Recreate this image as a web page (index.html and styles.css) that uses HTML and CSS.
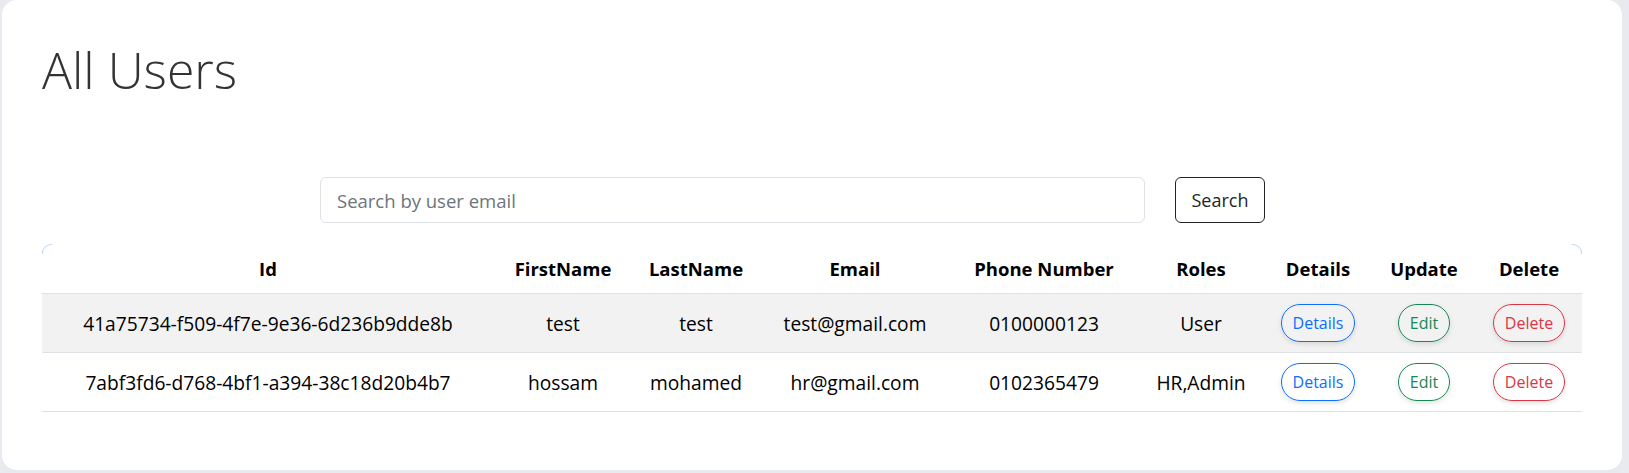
FILE: index.html
```html
<!DOCTYPE html>
<html lang="en">
<head>
<meta charset="utf-8">
<title>All Users</title>
<link rel="stylesheet" href="styles.css">
</head>
<body>
<main class="card">
  <h1 class="title">All Users</h1>
  <form class="search">
    <input class="search-input" type="text" placeholder="Search by user email">
    <button class="search-btn" type="button">Search</button>
  </form>
  <div class="table-wrap">
  <table class="users">
    <colgroup>
      <col class="c-id"><col class="c-first"><col class="c-last"><col class="c-email"><col class="c-phone"><col class="c-roles"><col class="c-details"><col class="c-update"><col class="c-delete">
    </colgroup>
    <thead>
      <tr>
        <th>Id</th><th>FirstName</th><th>LastName</th><th>Email</th><th>Phone Number</th><th>Roles</th><th>Details</th><th>Update</th><th>Delete</th>
      </tr>
    </thead>
    <tbody>
      <tr class="striped">
        <td>41a75734-f509-4f7e-9e36-6d236b9dde8b</td>
        <td>test</td>
        <td>test</td>
        <td>test@gmail.com</td>
        <td>0100000123</td>
        <td>User</td>
        <td><a class="pill pill-blue" href="#">Details</a></td>
        <td><a class="pill pill-green" href="#">Edit</a></td>
        <td><a class="pill pill-red" href="#">Delete</a></td>
      </tr>
      <tr>
        <td>7abf3fd6-d768-4bf1-a394-38c18d20b4b7</td>
        <td>hossam</td>
        <td>mohamed</td>
        <td>hr@gmail.com</td>
        <td>0102365479</td>
        <td>HR,Admin</td>
        <td><a class="pill pill-blue" href="#">Details</a></td>
        <td><a class="pill pill-green" href="#">Edit</a></td>
        <td><a class="pill pill-red" href="#">Delete</a></td>
      </tr>
    </tbody>
  </table>
  </div>
</main>
</body>
</html>
```

FILE: styles.css
```css
html, body {
  margin: 0;
  padding: 0;
}

body {
  background: #e9eaef;
  font-family: "Open Sans", "Noto Sans", sans-serif;
  color: #212529;
}

.card {
  box-sizing: border-box;
  margin: 0 7px 0 2px;
  height: 470px;
  background: #ffffff;
  border-radius: 15px;
  padding: 40px 40px 0 40px;
}

.title {
  margin: 0;
  font-size: 50px;
  font-weight: 300;
  line-height: 60px;
  color: #333333;
}

.search {
  display: flex;
  align-items: center;
  gap: 30px;
  margin: 77px 0 0 0;
  padding-left: 278px;
}

.search-input {
  box-sizing: border-box;
  width: 825px;
  height: 46px;
  border: 1px solid #dee2e6;
  border-radius: 6px;
  padding: 0 16px;
  font-family: inherit;
  font-size: 18.5px;
  color: #212529;
  background: #fff;
  outline: none;
}

.search-input::placeholder {
  color: #6c757d;
}

.search-btn {
  box-sizing: border-box;
  width: 90px;
  height: 46px;
  border: 1px solid #212529;
  border-radius: 6px;
  background: #fff;
  font-family: inherit;
  font-size: 18px;
  color: #212529;
  padding: 0;
}

.table-wrap {
  position: relative;
  margin-top: 21px;
}

.table-wrap::before,
.table-wrap::after {
  content: "";
  position: absolute;
  top: 0;
  width: 9px;
  height: 9px;
  border-top: 1px solid #b9d3fb;
}

.table-wrap::before {
  left: 0;
  border-left: 1px solid #b9d3fb;
  border-top-left-radius: 9px;
}

.table-wrap::after {
  right: 0;
  border-right: 1px solid #b9d3fb;
  border-top-right-radius: 9px;
}

.users {
  width: 100%;
  border-collapse: collapse;
  table-layout: fixed;
  font-size: 19.2px;
  color: #000;
}

.c-id { width: 452px; }
.c-first { width: 138px; }
.c-last { width: 128px; }
.c-email { width: 190px; }
.c-phone { width: 188px; }
.c-roles { width: 126px; }
.c-details { width: 108px; }
.c-update { width: 104px; }
.c-delete { width: 106px; }

.users th {
  font-size: 18.5px;
  font-weight: 700;
  text-align: center;
  padding: 11px 4px;
  line-height: 27px;
  border-bottom: 1px solid #dee2e6;
  white-space: nowrap;
}

.users td {
  text-align: center;
  vertical-align: middle;
  padding: 10px 4px;
  line-height: 27px;
  border-bottom: 1px solid #dee2e6;
  white-space: nowrap;
}

.users tr.striped td {
  background: #f2f2f2;
}

.pill {
  display: inline-block;
  box-sizing: border-box;
  height: 38px;
  line-height: 36px;
  padding: 0 11px;
  border: 1px solid currentColor;
  border-radius: 50px;
  font-size: 16px;
  text-decoration: none;
  background: transparent;
  box-shadow: 0 2px 5px rgba(0, 0, 0, 0.12);
  vertical-align: middle;
}

.pill-blue { color: #0d6efd; }
.pill-green { color: #198754; }
.pill-red { color: #dc3545; }
```
